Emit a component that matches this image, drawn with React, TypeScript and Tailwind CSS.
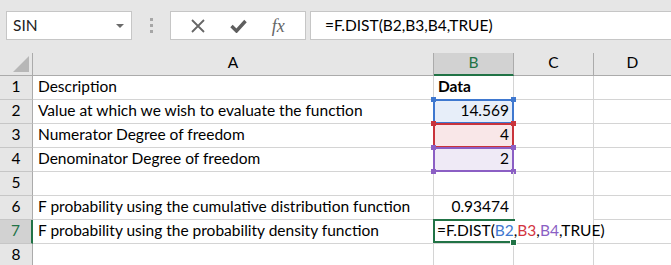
import React from 'react';

const FONT = "font-['Lato','Open_Sans',sans-serif]";

const blue = '#3f78cf';
const red = '#c9343c';
const purple = '#8b5fc4';

type Range = { color: string; fill: string };

function RangeBox({ color }: { color: string }) {
  const handle = 'absolute w-[5px] h-[5px]';
  return (
    <div className="absolute -left-[1px] -top-[1px] -right-[1px] -bottom-[1px] pointer-events-none">
      <div className="absolute inset-0 border-2" style={{ borderColor: color }} />
      <div className={`${handle} -left-[2px] -top-[2px]`} style={{ background: color }} />
      <div className={`${handle} -right-[2px] -top-[2px]`} style={{ background: color }} />
      <div className={`${handle} -left-[2px] -bottom-[2px]`} style={{ background: color }} />
      <div className={`${handle} -right-[2px] -bottom-[2px]`} style={{ background: color }} />
    </div>
  );
}

const rows: { a: string; b?: string; bold?: boolean; range?: Range }[] = [
  { a: 'Description', b: 'Data', bold: true },
  { a: 'Value at which we wish to evaluate the function', b: '14.569', range: { color: blue, fill: '#e7eef9' } },
  { a: 'Numerator Degree of freedom', b: '4', range: { color: red, fill: '#f9e7e8' } },
  { a: 'Denominator Degree of freedom', b: '2', range: { color: purple, fill: '#efeaf6' } },
  { a: '' },
  { a: 'F probability using the cumulative distribution function', b: '0.93474' },
  { a: 'F probability using the probability density function' },
  { a: '' },
];

export default function App() {
  return (
    <div className={`w-[671px] h-[265px] overflow-hidden bg-white text-[15.5px] text-black ${FONT}`}>
      {/* Name box + formula bar */}
      <div className="h-[53px] bg-[#e6e6e6] pt-[11px] flex items-start">
        <div className="ml-[6px] w-[126px] h-[29px] bg-white border border-[#c6c6c6] flex items-center justify-between pl-[6px] pr-[7px]">
          <span className="text-[#222]">SIN</span>
          <span className="w-0 h-0 border-l-[4px] border-r-[4px] border-t-[4px] border-l-transparent border-r-transparent border-t-[#6a6a6a]" />
        </div>
        <div className="w-[38px] h-[29px] flex flex-col items-center justify-center gap-[3px]">
          <span className="w-[3px] h-[3px] bg-[#a6a6a6]" />
          <span className="w-[3px] h-[3px] bg-[#a6a6a6]" />
          <span className="w-[3px] h-[3px] bg-[#a6a6a6]" />
        </div>
        <div className="w-[136px] h-[29px] bg-white border border-[#c6c6c6] flex items-center justify-around px-[8px]">
          <svg width="14" height="14" viewBox="0 0 14 14">
            <path d="M1 1 L13 13 M13 1 L1 13" stroke="#666" strokeWidth="1.8" fill="none" />
          </svg>
          <svg width="17" height="14" viewBox="0 0 17 14">
            <path d="M1.5 7 L6.5 12 L15.5 2" stroke="#5e5e5e" strokeWidth="3.4" fill="none" />
          </svg>
          <span className="font-['Liberation_Serif',serif] italic text-[18px] text-[#666] leading-none">fx</span>
        </div>
        <div className="ml-[4px] flex-1 h-[29px] bg-white border border-[#c6c6c6] border-r-0 flex items-center pl-[14px]">
          <span>=F.DIST(B2,B3,B4,TRUE)</span>
        </div>
      </div>

      {/* Sheet */}
      <div className="grid grid-cols-[33px_401px_80px_80px_1fr] grid-rows-[23px_repeat(8,24px)]">
        {/* header row */}
        <div className="relative bg-[#e6e6e6] border-r border-b border-[#ababab]">
          <svg className="absolute right-[3px] bottom-[3px]" width="16" height="16" viewBox="0 0 16 16">
            <path d="M16 0 L16 16 L0 16 Z" fill="#b7b7b7" />
          </svg>
        </div>
        <div className="bg-[#e6e6e6] border-r border-b border-[#ababab] flex items-end justify-center pb-[1px]">A</div>
        <div className="bg-[#d2d2d2] border-r border-[#ababab] border-b-2 border-b-[#217346] flex items-end justify-center text-[#217346]">B</div>
        <div className="bg-[#e6e6e6] border-r border-b border-[#ababab] flex items-end justify-center pb-[1px]">C</div>
        <div className="bg-[#e6e6e6] border-b border-[#ababab] flex items-end justify-center pb-[1px]">D</div>

        {rows.map((r, i) => {
          const n = i + 1;
          const active = n === 7;
          return (
            <React.Fragment key={n}>
              <div
                className={
                  active
                    ? 'bg-[#d2d2d2] border-r-2 border-r-[#217346] border-b border-b-[#c6c6c6] flex items-end justify-center text-[#217346] pb-[1px]'
                    : 'bg-[#e6e6e6] border-r border-r-[#ababab] border-b border-b-[#c6c6c6] flex items-end justify-center pb-[1px]'
                }
              >
                {n}
              </div>
              <div className="border-r border-b border-[#d4d4d4] pl-[5px] flex items-end pb-[1px] whitespace-nowrap">{r.a}</div>
              {active ? (
                <div className="relative z-10 border-b border-[#d4d4d4]">
                  <div className="absolute -left-[1px] -top-[1px] w-[160px] h-[24px] bg-white flex items-end pl-[4px] pb-[1px] whitespace-nowrap">
                    <span>=F.DIST(</span>
                    <span style={{ color: '#3f78cf' }}>B2</span>
                    <span>,</span>
                    <span style={{ color: '#d3353f' }}>B3</span>
                    <span>,</span>
                    <span style={{ color: '#8b5fc4' }}>B4</span>
                    <span>,TRUE)</span>
                    <span className="ml-[1px] w-[1px] h-[19px] bg-black mb-[1px]" />
                  </div>
                  <div className="absolute -left-[1px] -top-[1px] w-[82px] h-[24px] border-2 border-r-0 border-[#217346]" />
                  <div className="absolute -right-[3px] -bottom-[3px] w-[5px] h-[5px] bg-[#217346] border border-white box-content" />
                </div>
              ) : (
                <div
                  className={`relative border-r border-b border-[#d4d4d4] flex items-end pb-[1px] pr-[4px] ${
                    r.bold ? 'justify-start pl-[4px] font-bold' : 'justify-end'
                  }`}
                  style={r.range ? { background: r.range.fill } : undefined}
                >
                  {r.b}
                  {r.range && <RangeBox color={r.range.color} />}
                </div>
              )}
              <div className="border-r border-b border-[#d4d4d4]" />
              <div className="border-b border-[#d4d4d4]" />
            </React.Fragment>
          );
        })}
      </div>
    </div>
  );
}
